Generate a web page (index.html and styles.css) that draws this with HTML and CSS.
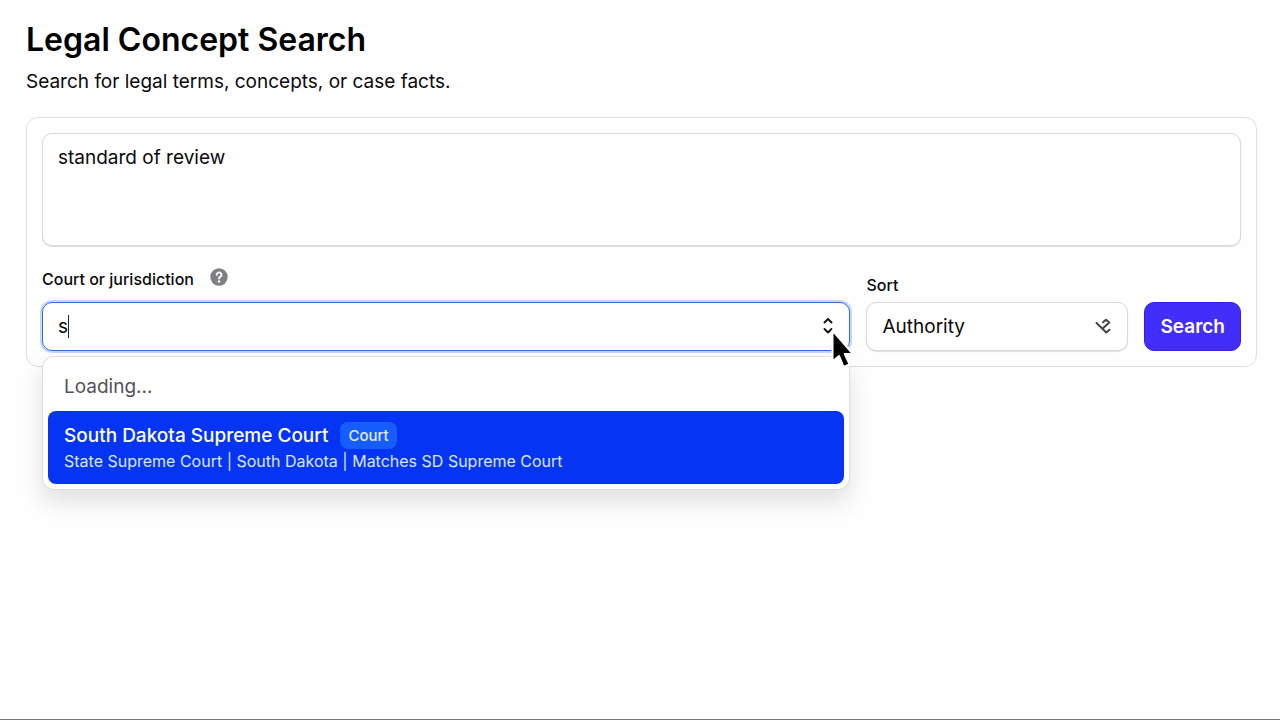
FILE: index.html
```html
<!DOCTYPE html>
<html lang="en">
  <head>
    <meta charset="UTF-8" />
    <meta name="viewport" content="width=device-width, initial-scale=1.0" />
    <title>Legal Concept Search</title>
    <link rel="stylesheet" href="styles.css">
  </head>
  <body>
    <main class="page">
      <h1 class="title">Legal Concept Search</h1>
      <p class="intro">Search for legal terms, concepts, or case facts.</p>

      <form class="search-form">
        <textarea class="control query" aria-label="Search query">standard of review</textarea>

        <div class="filters">
          <div class="field court">
            <div class="label-row">
              <label for="court">Court or jurisdiction</label>
              <button class="help" type="button" aria-label="Help">
                <svg viewBox="0 0 18 18" width="18" height="18">
                  <circle cx="9" cy="9" r="8.7" fill="#808084" />
                  <path d="M6.7 6.700a2.400 2.300 0 1 1 3.600 2c-.9.5-1.3.9-1.3 1.800" fill="none" stroke="#fff" stroke-width="1.9" stroke-linecap="round" />
                  <circle cx="9" cy="13.5" r="1.2" fill="#fff" />
                </svg>
              </button>
            </div>
            <div class="combobox">
              <input class="control court-input" id="court" type="text" value="s" role="combobox" aria-expanded="true" aria-controls="court-options" autocomplete="off" />
              <span class="caret"></span>
              <button class="toggle" type="button" aria-label="Show courts">
                <svg viewBox="0 0 12 18" width="12" height="18">
                  <path d="M2.500 5.500l3.500-3.500 3.500 3.500M2.500 12l3.500 3.500 3.500-3.500" fill="none" stroke="#111" stroke-width="1.9" stroke-linecap="round" stroke-linejoin="round" />
                </svg>
              </button>
              <svg class="pointer" viewBox="0 0 26 44" width="26" height="44">
                <path d="M3.500 2.500v31l6.500-5.500 4.500 11 6-2.700-4.700-10.300H24z" fill="#000" stroke="#fff" stroke-width="2" stroke-linejoin="round" />
              </svg>
              <div class="menu">
                <p class="loading">Loading...</p>
                <ul class="options" id="court-options" role="listbox">
                  <li class="option" role="option" aria-selected="true">
                    <div class="option-head">
                      <span class="option-name">South Dakota Supreme Court</span>
                      <span class="badge">Court</span>
                    </div>
                    <div class="option-meta">State Supreme Court | South Dakota | Matches SD Supreme Court</div>
                  </li>
                </ul>
              </div>
            </div>
          </div>

          <div class="field sort">
            <label for="sort">Sort</label>
            <div class="select-wrap">
              <select class="control sort-select" id="sort">
                <option>Authority</option>
              </select>
              <svg class="sort-icon" viewBox="0 0 18 18" width="18" height="18">
                <path d="M1.500 6l9.800 9.500 3.200-2.800M8 5.300l3-2.600 3.300 2.800-6.300 5.700" fill="none" stroke="#444" stroke-width="2" stroke-linecap="round" stroke-linejoin="round" />
              </svg>
            </div>
          </div>

          <button class="submit" type="submit">Search</button>
        </div>
      </form>
    </main>
  </body>
</html>
```
FILE: styles.css
```css
* {
  box-sizing: border-box;
}

body {
  margin: 0;
  min-height: 100vh;
  background-color: #fefefe;
  border-bottom: 1px solid #777;
  color: #09090b;
  font-family: Inter, "Liberation Sans", sans-serif;
  font-size: 19px;
}

button,
input,
select,
textarea {
  font: inherit;
  color: inherit;
}

.page {
  padding: 20px 23px 0 26px;
}

.title {
  margin: 0;
  color: #000;
  font-size: 32px;
  font-weight: 600;
  line-height: 40px;
}

.intro {
  margin: 8px 0 22px;
  line-height: 27px;
}

.search-form {
  padding: 15px;
  border: 1px solid #dedee0;
  border-radius: 12px;
}

.control {
  display: block;
  width: 100%;
  background-color: #fff;
  border: 1px solid #d8d8da;
  border-radius: 10px;
  outline: none;
}

.query {
  height: 113px;
  padding: 10px 15px;
  line-height: 27px;
  resize: none;
  box-shadow: 0 1px 1px rgba(0, 0, 0, 0.12);
}

.filters {
  display: flex;
  align-items: flex-end;
  gap: 16px;
  margin-top: 21px;
}

.field {
  font-size: 16px;
  font-weight: 500;
  line-height: 24px;
}

.court {
  flex: 1;
}

.label-row {
  display: flex;
  align-items: center;
  gap: 16px;
  margin-bottom: 11px;
}

.help,
.toggle {
  padding: 0;
  border: 0;
  background: none;
  cursor: pointer;
}

.help {
  height: 22px;
  padding-bottom: 4px;
}

.help svg,
.toggle svg {
  display: block;
}

.combobox,
.select-wrap {
  position: relative;
  font-size: 19px;
  font-weight: 400;
}

.court-input {
  height: 49px;
  padding: 0 48px 0 15px;
  border-color: #2f6fd6;
  box-shadow: 0 0 0 2px #c5d6fa;
  caret-color: transparent;
}

.caret {
  position: absolute;
  top: 13px;
  left: 26px;
  width: 1px;
  height: 23px;
  background-color: #222;
}

.toggle {
  position: absolute;
  top: 15px;
  right: 16px;
}

.pointer {
  position: absolute;
  top: 26px;
  right: -5px;
  z-index: 2;
}

.menu {
  position: absolute;
  top: 54px;
  left: 0;
  right: 0;
  padding: 5px;
  background-color: #fff;
  border: 1px solid #dddddf;
  border-radius: 12px;
  box-shadow: 0 12px 24px rgba(0, 0, 0, 0.12);
}

.loading {
  margin: 0;
  padding: 11px 16px;
  color: #52525b;
  line-height: 27px;
}

.options {
  margin: 0;
  padding: 0;
  list-style: none;
}

.option {
  padding: 11px 16px;
  border-radius: 8px;
  background-color: #0535f3;
  color: #fff;
}

.option-head {
  display: flex;
  align-items: center;
  gap: 12px;
}

.option-name {
  font-weight: 500;
  line-height: 27px;
}

.badge {
  padding: 0 8px;
  border-radius: 8px;
  background-color: #155dfc;
  color: #e4edff;
  font-size: 15px;
  font-weight: 500;
  line-height: 27px;
}

.option-meta {
  color: #dbe7ff;
  font-size: 16px;
  line-height: 24px;
}

.sort {
  width: 262px;
}

.sort label {
  display: block;
  margin-bottom: 5px;
}

.sort-select {
  height: 49px;
  padding: 0 48px 0 15px;
  appearance: none;
  box-shadow: 0 1px 1px rgba(0, 0, 0, 0.12);
}

.sort-icon {
  position: absolute;
  top: 15px;
  right: 15px;
  pointer-events: none;
}

.submit {
  height: 49px;
  padding: 0 15px;
  border: 1px solid #3520dc;
  border-radius: 10px;
  background-color: #432dfa;
  color: #fff;
  font-size: 19px;
  font-weight: 600;
  cursor: pointer;
}
```
